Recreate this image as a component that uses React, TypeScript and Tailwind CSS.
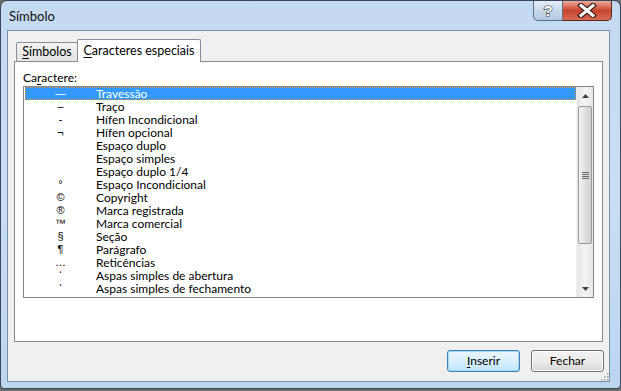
import React from 'react';

const rows: { sym: string; label: string }[] = [
  { sym: '—', label: 'Travessão' },
  { sym: '–', label: 'Traço' },
  { sym: '-', label: 'Hífen Incondicional' },
  { sym: '¬', label: 'Hífen opcional' },
  { sym: '', label: 'Espaço duplo' },
  { sym: '', label: 'Espaço simples' },
  { sym: '', label: 'Espaço duplo 1/4' },
  { sym: '°', label: 'Espaço Incondicional' },
  { sym: '©', label: 'Copyright' },
  { sym: '®', label: 'Marca registrada' },
  { sym: '™', label: 'Marca comercial' },
  { sym: '§', label: 'Seção' },
  { sym: '¶', label: 'Parágrafo' },
  { sym: '…', label: 'Reticências' },
  { sym: '‘', label: 'Aspas simples de abertura' },
  { sym: '’', label: 'Aspas simples de fechamento' },
];

function CaptionButtons() {
  return (
    <div className="flex items-start mr-[8px]">
      <div className="w-[30px] h-[20px] border border-t-0 border-[#5d6f86] rounded-bl-[5px] bg-gradient-to-b from-[#e3edf8] via-[#c9d9ec] to-[#b3c8e0] flex items-center justify-center">
        <svg width="14" height="16" viewBox="0 0 14 16">
          <text x="7" y="13" textAnchor="middle" fontSize="15" fontWeight="bold" fontFamily="'Liberation Sans', sans-serif" fill="#fff" stroke="#3b4654" strokeWidth="1.2" paintOrder="stroke">?</text>
        </svg>
      </div>
      <div className="w-[49px] h-[20px] border border-t-0 border-l-0 border-[#5c2a22] rounded-br-[5px] bg-gradient-to-b from-[#e9a99b] via-[#c8432d] to-[#d66a55] flex items-center justify-center">
        <svg width="20" height="15" viewBox="0 0 20 15">
          <path d="M4 2.5 L16 12.5 M16 2.5 L4 12.5" stroke="#3a1f1a" strokeWidth="5.5" strokeLinecap="square" />
          <path d="M4 2.5 L16 12.5 M16 2.5 L4 12.5" stroke="#fff" strokeWidth="3" strokeLinecap="square" />
        </svg>
      </div>
    </div>
  );
}

function ScrollBar() {
  return (
    <div className="w-[17px] flex flex-col bg-gradient-to-r from-[#e7e7e7] via-[#f4f4f4] to-[#e7e7e7] border-l border-[#f0f0f0]">
      <div className="h-[17px] flex items-center justify-center">
        <svg width="7" height="4" viewBox="0 0 7 4"><path d="M0 4 L3.5 0 L7 4 Z" fill="#404040" /></svg>
      </div>
      <div className="flex-1 px-px pt-[2px] pb-[36px]">
        <div className="h-full rounded-[2px] border border-[#9a9a9a] bg-gradient-to-r from-[#f2f2f2] via-[#e0e0e0] to-[#cfcfcf] flex items-center justify-center">
          <div className="flex flex-col gap-px">
            <div className="w-[7px] h-px bg-[#666]" />
            <div className="w-[7px] h-px bg-[#666]" />
            <div className="w-[7px] h-px bg-[#666]" />
            <div className="w-[7px] h-px bg-[#666]" />
          </div>
        </div>
      </div>
      <div className="h-[17px] flex items-center justify-center">
        <svg width="7" height="4" viewBox="0 0 7 4"><path d="M0 0 L3.5 4 L7 0 Z" fill="#404040" /></svg>
      </div>
    </div>
  );
}

export default function App() {
  return (
    <div className="w-[621px] h-[391px] bg-[#6b6b6b] font-['Lato','Liberation_Sans',sans-serif] text-[12px] text-black overflow-hidden">
      <div className="w-[621px] h-[389px] rounded-t-[7px] rounded-b-[4px] border border-[#38475a] bg-gradient-to-b from-[#c4daf1] via-[#c9def4] to-[#bcd5ef] flex flex-col">
        <div className="h-[29px] flex items-start justify-between shrink-0">
          <div className="pl-[8px] pt-[7px] text-[13px] leading-[16px] text-[#111]">Símbolo</div>
          <CaptionButtons />
        </div>
        <div className="ml-[6px] mr-[10px] mb-[7px] flex-1 border border-[#7b8fa6] bg-[#f0f0f0] flex flex-col">
          <div className="flex items-end pl-[8px] pt-[7px] h-[30px]">
            <div className="h-[19px] w-[62px] border border-b-0 border-[#898c95] rounded-t-[2px] bg-gradient-to-b from-[#f3f3f3] to-[#e3e3e3] flex items-center justify-center leading-none text-[12.5px]">
              <span><span className="underline underline-offset-2">S</span>ímbolos</span>
            </div>
            <div className="relative -mb-px h-[23px] w-[124px] border border-b-0 border-[#898c95] rounded-t-[2px] bg-white flex items-center justify-center leading-none z-10 -ml-px text-[12.5px]">
              <span><span className="underline underline-offset-2">C</span>aracteres especiais</span>
            </div>
          </div>
          <div className="mx-[6px] h-[281px] border border-[#898c95] bg-white flex flex-col px-[8px]">
            <div className="pt-[9px] h-[24px] leading-[14px]">
              Ca<span className="underline underline-offset-2">r</span>actere:
            </div>
            <div className="h-[212px] border border-[#828790] bg-white flex">
              <div className="flex-1 flex flex-col pl-px">
                {rows.map((r, i) => (
                  <div
                    key={r.label}
                    className={
                      i === 0
                        ? 'h-[13px] flex items-center leading-[13px] bg-[#3399ff] text-white outline-1 outline-dotted outline-[#d98a3a] -outline-offset-1'
                        : 'h-[13px] flex items-center leading-[13px]'
                    }
                  >
                    <span className="w-[71px] text-center font-['Liberation_Sans',sans-serif] text-[11px]">{r.sym}</span>
                    <span>{r.label}</span>
                  </div>
                ))}
              </div>
              <ScrollBar />
            </div>
          </div>
          <div className="flex justify-end gap-[11px] pr-[5px] pt-[8px]">
            <button className="w-[73px] h-[22px] rounded-[3px] border border-[#3c7fb1] bg-gradient-to-b from-[#eaf6fd] via-[#d9f0fc] to-[#bee6fd] shadow-[inset_0_0_0_1px_#a7d9f5] leading-none">
              <span className="underline underline-offset-2">I</span>nserir
            </button>
            <button className="w-[73px] h-[22px] rounded-[3px] border border-[#707070] bg-gradient-to-b from-[#f2f2f2] via-[#ebebeb] to-[#d6d6d6] shadow-[inset_0_0_0_1px_#fcfcfc] leading-none">
              Fechar
            </button>
          </div>
          <div className="flex-1 flex items-end justify-end">
            <svg width="9" height="9" viewBox="0 0 9 9">
              <rect x="7" y="1" width="1.5" height="1.5" fill="#a0a0a0" />
              <rect x="4" y="4" width="1.5" height="1.5" fill="#a0a0a0" />
              <rect x="7" y="4" width="1.5" height="1.5" fill="#a0a0a0" />
              <rect x="1" y="7" width="1.5" height="1.5" fill="#a0a0a0" />
              <rect x="4" y="7" width="1.5" height="1.5" fill="#a0a0a0" />
              <rect x="7" y="7" width="1.5" height="1.5" fill="#a0a0a0" />
            </svg>
          </div>
        </div>
      </div>
    </div>
  );
}
